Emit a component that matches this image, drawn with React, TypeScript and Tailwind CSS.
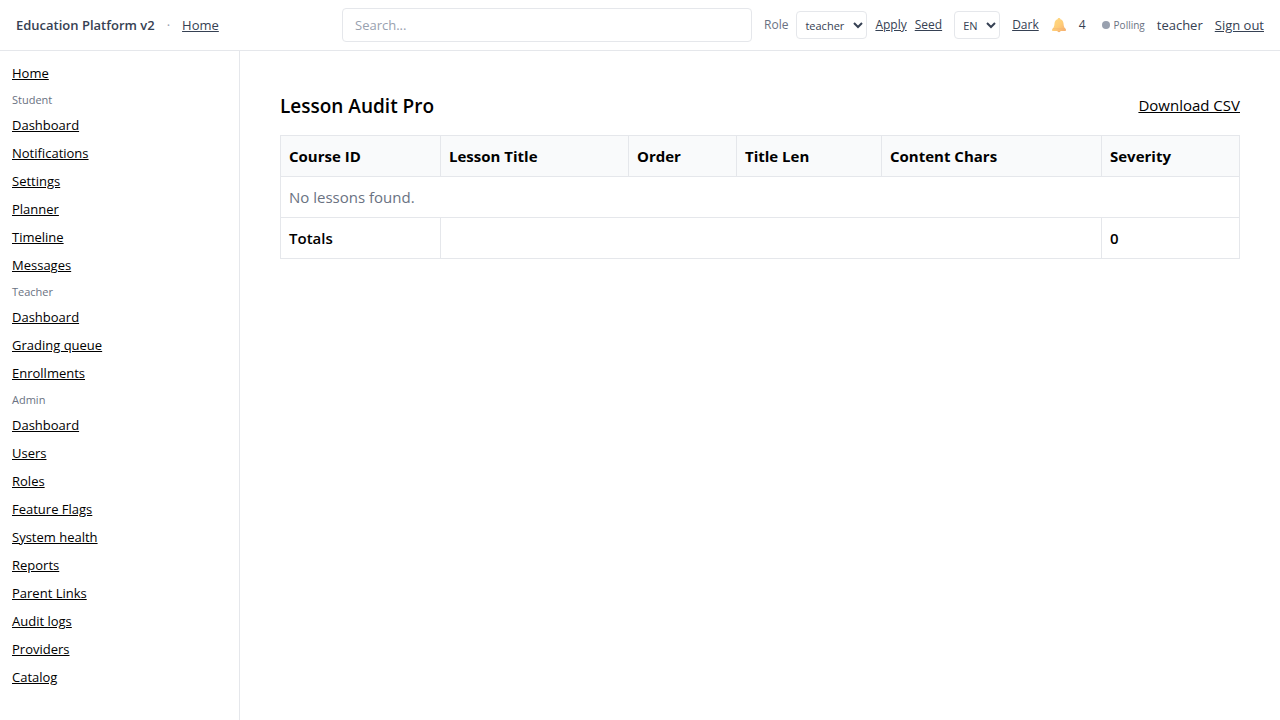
type NavGroup = { title: string; links: string[] };

const groups: NavGroup[] = [
  { title: 'Student', links: ['Dashboard', 'Notifications', 'Settings', 'Planner', 'Timeline', 'Messages'] },
  { title: 'Teacher', links: ['Dashboard', 'Grading queue', 'Enrollments'] },
  {
    title: 'Admin',
    links: ['Dashboard', 'Users', 'Roles', 'Feature Flags', 'System health', 'Reports', 'Parent Links', 'Audit logs', 'Providers', 'Catalog'],
  },
];

function BellIcon() {
  return (
    <svg viewBox="0 0 16 16" className="size-4" aria-hidden="true">
      <defs>
        <linearGradient id="bell" x1="0" y1="0" x2="1" y2="1">
          <stop offset="0" stopColor="#ffdc83" />
          <stop offset="0.55" stopColor="#ffcd78" />
          <stop offset="1" stopColor="#f5ad70" />
        </linearGradient>
      </defs>
      <circle cx="8" cy="13.6" r="1.7" fill="#f3b572" />
      <path
        d="M8 1c.8 0 1.300.5 1.400 1.200 1.900.6 2.900 2.100 3.100 4.300.2 2.600.6 3.900 1.900 5.100.5.5.6 1 .6 1.600 0 .6-.3.800-.8.800H1.800c-.5 0-.8-.2-.8-.8 0-.6.1-1.100.6-1.600 1.300-1.200 1.700-2.500 1.900-5.100.2-2.200 1.200-3.700 3.100-4.300C6.700 1.500 7.200 1 8 1Z"
        fill="url(#bell)"
      />
      <path d="M2 11.800h12" stroke="#f3b270" strokeWidth="0.600" />
    </svg>
  );
}

function Header() {
  return (
    <header className="flex h-[51px] items-center gap-3 border-b border-gray-200 px-4 text-[13px] leading-5 text-gray-700">
      <span className="font-semibold whitespace-nowrap">Education Platform v2</span>
      <span className="text-gray-400">·</span>
      <a href="#home" className="underline">Home</a>
      <input
        type="search"
        aria-label="Search"
        placeholder="Search..."
        className="ml-auto h-[34px] w-[410px] min-w-0 rounded border border-gray-200 px-3 placeholder:text-gray-400"
      />
      <div className="flex items-center gap-2 text-[12px]">
        <label htmlFor="role" className="text-gray-500">Role</label>
        <select id="role" defaultValue="teacher" className="h-7 w-[71px] rounded border border-gray-200 bg-white px-1 text-[11px]">
          <option>teacher</option>
          <option>student</option>
          <option>admin</option>
        </select>
        <button type="button" className="underline">Apply</button>
        <button type="button" className="underline">Seed</button>
      </div>
      <select aria-label="Language" defaultValue="EN" className="h-7 w-[46px] rounded border border-gray-200 bg-white px-1 text-[11px]">
        <option>EN</option>
        <option>ES</option>
      </select>
      <button type="button" className="text-[12px] underline">Dark</button>
      <button type="button" className="flex items-center gap-3 text-[12px]" aria-label="Notifications, 4">
        <BellIcon />
        <span>4</span>
      </button>
      <span className="flex items-center gap-1 pl-1 text-[10px] text-gray-500">
        <span className="size-2 rounded-full bg-gray-400" />
        Polling
      </span>
      <span>teacher</span>
      <button type="button" className="whitespace-nowrap underline">Sign out</button>
    </header>
  );
}

function Sidebar() {
  return (
    <nav className="w-60 shrink-0 border-r border-gray-200 p-3 text-[13px] leading-5">
      <a href="#home" className="block w-fit underline">Home</a>
      {groups.map((group) => (
        <section key={group.title}>
          <h2 className="mt-2 mb-[6px] text-[11px] leading-[18px] text-gray-500">{group.title}</h2>
          <ul className="space-y-2">
            {group.links.map((link) => (
              <li key={link}>
                <a href={`#${group.title}-${link}`} className="block w-fit underline">{link}</a>
              </li>
            ))}
          </ul>
        </section>
      ))}
    </nav>
  );
}

function AuditTable() {
  return (
    <table className="w-full table-fixed border-collapse text-left text-[15px] leading-6 [&_td]:border [&_td]:border-gray-200 [&_td]:p-2 [&_th]:border [&_th]:border-gray-200 [&_th]:p-2">
      <colgroup>
        <col className="w-[160px]" />
        <col className="w-[188px]" />
        <col className="w-[108px]" />
        <col className="w-[145px]" />
        <col className="w-[220px]" />
        <col className="w-[138px]" />
      </colgroup>
      <thead className="bg-gray-50">
        <tr>
          <th>Course ID</th>
          <th>Lesson Title</th>
          <th>Order</th>
          <th>Title Len</th>
          <th>Content Chars</th>
          <th>Severity</th>
        </tr>
      </thead>
      <tbody>
        <tr>
          <td colSpan={6} className="text-gray-500">No lessons found.</td>
        </tr>
      </tbody>
      <tfoot className="font-semibold">
        <tr>
          <td>Totals</td>
          <td colSpan={4} />
          <td>0</td>
        </tr>
      </tfoot>
    </table>
  );
}

export default function App() {
  return (
    <div className="flex min-h-screen flex-col bg-white font-['Open_Sans','Noto_Sans',sans-serif] text-black">
      <Header />
      <div className="flex grow">
        <Sidebar />
        <main className="min-w-0 grow p-10">
          <div className="mb-[14px] flex items-start justify-between">
            <h1 className="text-[19px] leading-[30px] font-semibold">Lesson Audit Pro</h1>
            <a href="#csv" className="text-[15px] leading-7 underline">Download CSV</a>
          </div>
          <AuditTable />
        </main>
      </div>
    </div>
  );
}
